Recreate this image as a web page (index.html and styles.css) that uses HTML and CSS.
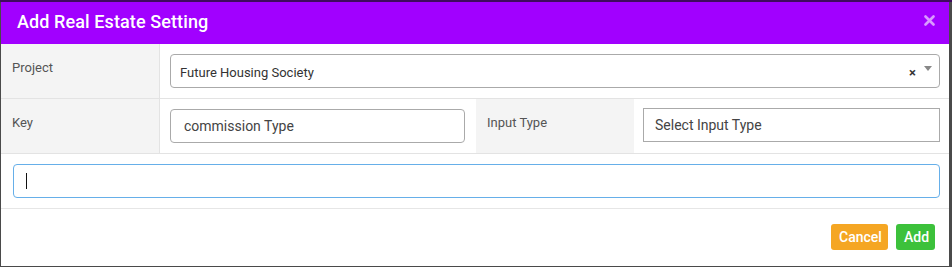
FILE: index.html
```html
<!DOCTYPE html>
<html>
<head>
  <meta charset="utf-8">
  <title>Add Real Estate Setting</title>
  <link rel="stylesheet" href="styles.css">
</head>
<body>
  <div class="modal">
    <div class="modal-header">
      <h2>Add Real Estate Setting</h2>
      <svg class="close" width="11" height="11" viewBox="0 0 11 11">
        <path d="M1.5 1.5 L9.5 9.5 M9.5 1.5 L1.5 9.5" stroke="currentColor" stroke-width="2.6" stroke-linecap="round"/>
      </svg>
    </div>

    <div class="row row-project">
      <div class="label">Project</div>
      <div class="cell">
        <div class="select">
          <span class="value">Future Housing Society</span>
          <span class="clear">×</span>
          <span class="arrow"></span>
        </div>
      </div>
    </div>

    <div class="row row-key">
      <div class="label">Key</div>
      <div class="cell cell-key">
        <div class="input rounded">commission Type</div>
      </div>
      <div class="label">Input Type</div>
      <div class="cell cell-type">
        <div class="input square">Select Input Type</div>
      </div>
    </div>

    <div class="row row-value">
      <div class="input focus"><span class="caret"></span></div>
    </div>

    <div class="modal-footer">
      <button class="btn cancel">Cancel</button>
      <button class="btn add">Add</button>
    </div>
  </div>
</body>
</html>
```

FILE: styles.css
```css
* {
  box-sizing: border-box;
}

html, body {
  margin: 0;
  height: 100%;
}

body {
  background: linear-gradient(#3f0a5e 0, #3f0a5e 2px, #4a4a4a 2px);
  font-family: Roboto, "Liberation Sans", sans-serif;
  padding: 2px 3px 1px 1px;
}

.modal {
  background: #fff;
  height: 264px;
  display: flex;
  flex-direction: column;
}

.modal-header {
  background: #a100ff;
  height: 42px;
  display: flex;
  align-items: center;
  justify-content: space-between;
  padding: 0 14px 0 16px;
  color: #fff;
}

.modal-header h2 {
  margin: 0;
  font-size: 18px;
  font-weight: 500;
  letter-spacing: 0.1px;
  padding-bottom: 3px;
}

.close {
  color: rgba(255, 255, 255, 0.6);
  margin-bottom: 5px;
}

.row {
  display: grid;
  border-bottom: 1px solid #e3e3e3;
}

.row-project {
  grid-template-columns: 159px 1fr;
}

.row-key {
  grid-template-columns: 159px 316px 158px 1fr;
}

.label {
  background: #f4f4f4;
  color: #555;
  font-size: 13px;
  line-height: 18px;
  padding: 15px 11px;
}

.row-project .label,
.row-key > .label:first-child {
  border-right: 1px solid #e3e3e3;
}

.cell {
  padding: 10px 9px 10px 10px;
}

.cell-key {
  padding: 10px 11px 10px 10px;
}

.cell-type {
  padding: 9px 9px 11px 9px;
}

.select {
  height: 34px;
  border: 1px solid #aaa;
  border-radius: 4px;
  display: flex;
  align-items: center;
  padding: 0 7px 0 9px;
  font-size: 13px;
  color: #333;
}

.select .value {
  flex: 1;
  padding-top: 2px;
}

.clear {
  font-weight: bold;
  font-size: 13px;
  color: #333;
  margin-right: 8px;
  padding-top: 3px;
}

.arrow {
  width: 0;
  height: 0;
  border-left: 4px solid transparent;
  border-right: 4px solid transparent;
  border-top: 5px solid #888;
  margin-bottom: 6px;
}

.input {
  height: 34px;
  border: 1px solid #aaa;
  font-size: 14px;
  color: #444;
  display: flex;
  align-items: center;
  padding: 0 13px;
}

.input.rounded {
  border-radius: 4px;
}

.input.square {
  padding: 0 11px;
}

.row-value {
  padding: 10px 9px 10px 12px;
  border-bottom-color: #e6e6e6;
}

.input.focus {
  border-color: #66afe9;
  border-radius: 4px;
  padding: 0 12px;
}

.caret {
  width: 1px;
  height: 16px;
  background: #111;
}

.modal-footer {
  flex: 1;
  display: flex;
  justify-content: flex-end;
  align-items: flex-start;
  gap: 8px;
  padding: 15px 14px 0 0;
}

.btn {
  border: none;
  border-radius: 3px;
  color: #fff;
  font-family: Roboto, "Liberation Sans", sans-serif;
  font-size: 14px;
  font-weight: 500;
  height: 26px;
  padding: 0 8px;
}

.cancel {
  background: #f5a623;
  width: 57px;
}

.add {
  background: #3cc13b;
  width: 39px;
}
```
